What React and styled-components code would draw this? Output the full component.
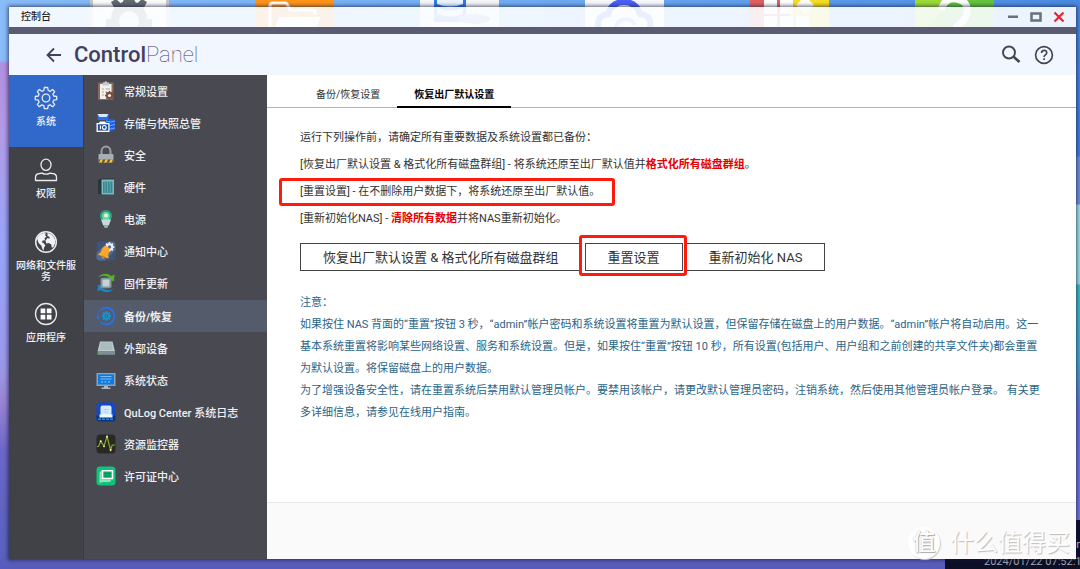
import React from "react";
import styled, { createGlobalStyle, css } from "styled-components";

const GlobalStyle = createGlobalStyle`
  *, *::before, *::after { box-sizing: border-box; }
  body {
    margin: 0;
    font-family: Roboto, "Noto Sans CJK SC", sans-serif;
    font-size: 11px;
    color: #333;
  }
  button { font-family: inherit; color: inherit; }
  p, h1, h2 { margin: 0; font-weight: 400; }
  svg { display: block; flex: none; }
`;

const highlightFrame = css`
  content: "";
  position: absolute;
  border: 3px solid #fd1b0e;
  border-radius: 3px;
  pointer-events: none;
`;

/* ---------- desktop ---------- */

const Desktop = styled.div`
  position: relative;
  display: flex;
  min-height: 100vh;
  padding: 7px 4px 10px 9px;
  overflow: hidden;
  background:
    linear-gradient(#5a5fbe, #565cbb) bottom / 100% 12px no-repeat,
    linear-gradient(#88bcf8 0, #8abcf9 60px, #b18fe0 64px, #b39ae6 130px, #96a5fa 250px, #9c97e8 370px, #9a85d4 400px, #6d68c8 450px, #5a62bd 540px) left / 30px 100% no-repeat,
    linear-gradient(#4a8be2 0, #4180d8 156px, #6d93e0 157px, #6d93e0 204px, #a4e4e6 205px, #9be0e2 284px, #3dbfc4 285px, #4aa9d0 360px, #6578d4 410px, #6f79dc 519px) right / 30px 100% no-repeat,
    linear-gradient(90deg, #88bcf8, #6fabf2 50%, #4a8be2);
`;

const AppRow = styled.div`
  position: absolute;
  top: 0;
  left: 90px;
  display: flex;
  gap: 86px;
`;

const StatusWidget = styled.div`
  position: absolute;
  right: 0;
  bottom: 0;
  width: 135px;
  height: 49px;
  padding-top: 18px;
  background: #0d0f26;
  color: #a9abb4;
  font-size: 11px;
  line-height: 14px;
  white-space: nowrap;
`;

const WidgetHost = styled.div`
  color: #d6d7dc;
  text-align: right;
`;

const WidgetTime = styled.time`
  display: block;
  padding: 3px 0 0 39px;
`;

const Watermark = styled.div`
  position: absolute;
  right: 10px;
  bottom: 10px;
  display: flex;
  align-items: center;
  gap: 10px;
  color: #fdfdfd;
  font-size: 24px;
  line-height: 32px;
  text-shadow: 1px 1px 1px #bbb;
`;

const WatermarkSeal = styled.span`
  width: 32px;
  height: 32px;
  border-radius: 50%;
  background: #fff;
  text-align: center;
  font-weight: 500;
  font-size: 23px;
  line-height: 31px;
  box-shadow: 1px 1px 1px #cfcfcf;
  text-shadow: 1px 1px 1px #aaa, 0 0 1px #aaa;
`;

/* ---------- window ---------- */

const Window = styled.main`
  position: relative;
  flex: 1;
  min-width: 0;
  display: flex;
  flex-direction: column;
  box-shadow: 0 0 4px 1px rgba(20, 22, 60, 0.7);
`;

const TitleBar = styled.header`
  display: flex;
  align-items: center;
  justify-content: space-between;
  height: 20px;
  padding: 0 11px 0 12px;
  background: rgba(251, 253, 255, 0.91);
`;

const WindowTitle = styled.h2`
  font-size: 10px;
  font-weight: 500;
  line-height: 18px;
  color: #222;
`;

const WindowControls = styled.div`
  display: flex;
  gap: 11px;
`;

const IconButton = styled.button`
  display: flex;
  padding: 0;
  border: 0;
  background: none;
  cursor: pointer;
`;

const AppHeader = styled.div`
  display: flex;
  align-items: center;
  height: 48px;
  padding: 0 22px 0 37px;
  border-top: 7px solid #5a5b73;
  background: #f2f6ff;
`;

const AppName = styled.h1`
  flex: 1;
  padding-left: 13px;
  font-size: 22px;
  line-height: 28px;
  font-weight: 100;
  color: #43405f;
  b { font-weight: 500; }
`;

const HeaderTools = styled.div`
  display: flex;
  gap: 13px;
`;

const Body = styled.div`
  flex: 1;
  display: flex;
`;

const Rail = styled.nav`
  flex: none;
  width: 74px;
  background: #414148;
`;

const RailItem = styled.button`
  display: flex;
  flex-direction: column;
  align-items: center;
  width: 100%;
  height: 72px;
  padding: 11px 6px 0;
  border: 0;
  background: ${(p) => (p.$active ? "#3169ca" : "none")};
  color: #f2f2f4;
  font-size: 10px;
  font-weight: 500;
  line-height: 11px;
  cursor: pointer;
  svg { margin-bottom: 6px; }
`;

const Menu = styled.nav`
  flex: none;
  width: 184px;
  border-left: 1px solid #3a3a40;
  background: #494951;
`;

const MenuList = styled.div`
  display: grid;
  grid-auto-rows: 1fr;
  height: 418px;
`;

const MenuItem = styled.button`
  display: flex;
  align-items: center;
  gap: 8px;
  padding: 0 12px 1px;
  border: 0;
  background: ${(p) => (p.$active ? "#545c6b" : "none")};
  color: #f0f0f2;
  font-size: 11px;
  font-weight: ${(p) => (p.$active ? 700 : 500)};
  text-align: left;
  cursor: pointer;
`;

const Main = styled.section`
  flex: 1;
  min-width: 0;
  display: flex;
  flex-direction: column;
  background: #fff;
`;

const Tabs = styled.div`
  display: flex;
  height: 33px;
  padding-left: 32px;
  border-bottom: 1px solid #b4b4b4;
`;

const Tab = styled.button`
  height: 33px;
  padding: 5px 17px 0;
  border: 0;
  border-bottom: 2px solid ${(p) => (p.$active ? "#000" : "transparent")};
  background: none;
  color: ${(p) => (p.$active ? "#000" : "#333")};
  font-size: 10px;
  font-weight: ${(p) => (p.$active ? 700 : 400)};
  cursor: pointer;
`;

const Content = styled.div`
  flex: 1;
  padding: 16px 30px 24px 33px;
`;

const Line = styled.p`
  position: relative;
  width: fit-content;
  line-height: 27px;
  ${(p) =>
    p.$framed &&
    css`
      &::after {
        ${highlightFrame}
        inset: 0 -15px -1px -21px;
      }
    `}
`;

const Danger = styled.strong`
  color: #e60000;
  font-weight: 700;
`;

const Actions = styled.div`
  display: flex;
  flex-wrap: wrap;
  gap: 3px;
  margin: 11px 0 21px;
`;

const ActionButton = styled.button`
  position: relative;
  z-index: ${(p) => (p.$framed ? 1 : 0)};
  height: 28px;
  padding: 0 22px 1px;
  border: 1px solid #444;
  background: #fff;
  font-size: 13px;
  white-space: nowrap;
  cursor: pointer;
  ${(p) =>
    p.$framed &&
    css`
      &::after {
        ${highlightFrame}
        inset: -9px -5px -6px -7px;
      }
    `}
`;

const Note = styled.div`
  color: #2a6488;
  line-height: 22px;
`;

const Footer = styled.footer`
  height: 57px;
  border-top: 1px solid #e8e8e8;
  background: #fafafa;
`;

/* ---------- drawings ---------- */

const GearShape = ({ cx, cy, r, teeth = 8, color, hole }) => (
  <g fill={color}>
    <circle cx={cx} cy={cy} r={r * 0.76} />
    {Array.from({ length: teeth }, (_, i) => (
      <rect
        key={i}
        x={cx - r * 0.18}
        y={cy - r}
        width={r * 0.36}
        height={r * 0.5}
        transform={`rotate(${(360 / teeth) * i} ${cx} ${cy})`}
      />
    ))}
    <circle cx={cx} cy={cy} r={r * 0.36} fill={hole} />
  </g>
);

const appTiles = [
  <>
    <path d="M0 0h79v28H0z" fill="#fbfbfa" />
    <path d="M0 0h3v28H0zM76 0h3v28h-3z" fill="#c9c9c9" />
    <g fill="#636b70">
      <circle cx="39" cy="19" r="18" />
      <path d="M36 -6h6l4 10h-14zM21 2l5-3 9 8-8 6zM57 2l-5-3-9 8 8 6zM16 19h46v9H16z" />
    </g>
    <circle cx="39" cy="21" r="10" fill="#eceeee" />
  </>,
  <>
    <path d="M0 0h79v28H0z" fill="#ff9418" />
    <path d="M15 28V6q0-3 3-3h12q2 0 3 3l2 4h22q3 0 3 3v2" fill="none" stroke="#fff" strokeWidth="3" />
    <path d="M24 17h42l-5 11H20z" fill="#fff" />
  </>,
  <>
    <path d="M0 0h79v28H0z" fill="#f4f7f8" />
    <path d="M14 0h32v22H14z" fill="#2f7bea" />
    <path d="M17 0h26v4q-13 5-26 0zM17 8q13 5 26 0v6q-13 5-26 0z" fill="#e9f4ff" />
    <ellipse cx="54" cy="19" rx="16" ry="5" fill="#8f9bd0" />
    <path d="M14 26q6-6 14-3h22l2 5H14z" fill="#fff" />
  </>,
  <>
    <path d="M0 0h79v28H0z" fill="#f6f9fb" />
    <path d="M14 30q-4-14 9-16Q27 2 39 2t16 12q14 2 9 16" fill="none" stroke="#4a62f5" strokeWidth="6" />
    <path d="M50 25a10 10 0 1 0 0 8" fill="none" stroke="#8b8af0" strokeWidth="4" />
  </>,
  <>
    <path d="M0 0h40v28H0z" fill="#e0605f" />
    <path d="M40 0h39v28H40z" fill="#f5de22" />
    <path d="M14 0h13v14H14zM30 0h13v14H30zM14 16h13v12H14zM30 16h13v12H30zM46 16h13v12H46zM46 5l9-9 9 9-9 9z" fill="#fff" />
  </>,
  <>
    <path d="M0 0h79v28H0z" fill="#63c43a" />
    <path d="M0 0h36L12 28H0z" fill="#9cdc34" />
    <path d="M26 10Q30-3 41-1q13 2 11 14-1 7-12 15" fill="none" stroke="#fff" strokeWidth="7" />
  </>,
];

const AppTile = ({ children }) => (
  <svg width="79" height="28" viewBox="0 0 79 28" aria-hidden="true">{children}</svg>
);

const RailIcon = ({ children }) => (
  <svg width="24" height="24" viewBox="0 0 24 24" fill="none" stroke="#e9ebef" strokeWidth="1.3" strokeLinejoin="round" aria-hidden="true">
    {children}
  </svg>
);

const railItems = [
  {
    label: "系统",
    active: true,
    icon: (
      <>
        <path d="M10.3 1.5h3.4l.5 3 1.9.8 2.5-1.8 2.1 2.1-1.8 2.5.8 1.9 3 .5v3.2l-3 .5-.8 1.9 1.8 2.5-2.1 2.1-2.5-1.8-1.9.8-.5 3h-3.4l-.5-3-1.9-.8-2.5 1.8-2.1-2.1 1.8-2.5-.8-1.9-3-.5v-3.2l3-.5.8-1.9-1.8-2.5 2.1-2.1 2.5 1.8 1.9-.8z" />
        <circle cx="12" cy="12" r="3.8" />
      </>
    ),
  },
  {
    label: "权限",
    icon: (
      <>
        <ellipse cx="12" cy="6.8" rx="5" ry="5.6" />
        <path d="M1.500 22.500v-3.300q0-3.200 4-3.700l2.700-.4q1.700 1.100 3.800 1.100t3.800-1.100l2.700.4q4 .5 4 3.700v3.300z" />
      </>
    ),
  },
  {
    label: "网络和文件服务",
    icon: (
      <>
        <circle cx="12" cy="12" r="10.3" strokeWidth="1.5" />
        <path fill="#f2f2f4" stroke="none" d="M3 8.500Q5 4 9.500 3l2.500.6-1 1.600 1.500 1.200-2 1.800.5 2-2.200.3-1 1.800 2 1 1.600 2.200-1.400 2-.4 3.200q-1.600-2-2.200-5L4.600 13zM13.500 3q5.500.8 7.400 6.500l.3 3.500-1.700 4-1.600.8-.6-3.300-2.600-1.500-2.300.4-1-2.600 1.800-2.600 2.500.2-.2-1.700-2-.8z" />
      </>
    ),
  },
  {
    label: "应用程序",
    icon: (
      <>
        <circle cx="12" cy="12" r="10.5" />
        <path fill="#fff" stroke="none" d="M6.600 6.600h4.700v4.700H6.600zM12.800 6.600h4.700v4.700h-4.700zM6.600 12.800h4.700v4.700H6.600zM12.800 12.800h4.700v4.700h-4.700z" />
      </>
    ),
  },
];

const MenuIcon = ({ children }) => (
  <svg width="20" height="20" viewBox="0 0 20 20" aria-hidden="true">{children}</svg>
);

const menuItems = [
  {
    label: "常规设置",
    icon: (
      <>
        <rect x="2" y="1.5" width="15.5" height="17.5" rx="1" fill="#8d6a5c" />
        <path d="M4 3h11.500v15H4z" fill="#f3f1ee" />
        <path d="M6.500 1.500h1.800Q9.700-.8 11.200 1.500H13v3H6.500z" fill="#c3cbd0" />
        <path d="M6 8h2M6 11h2M6 14h2M9.500 8h4.500M9.500 11h2" stroke="#a9a3a0" strokeWidth="1" />
        <GearShape cx={13.5} cy={14.5} r={4.5} color="#7a4b3a" hole="#f3f1ee" />
      </>
    ),
  },
  {
    label: "存储与快照总管",
    icon: (
      <>
        <path d="M1.500 1h11v6h-11z" fill="#2b6ff0" />
        <path d="M1.500 1h11l-2 3h-7z" fill="#d8eaff" />
        <path d="M10 7q4.500-2 9 0v10q-4.500 2-9 0z" fill="#1f5fe0" />
        <path d="M10 8q4.500 2 9 0M10 11.500q4.500 2 9 0M10 15q4.500 2 9 0" fill="none" stroke="#6fa8ff" strokeWidth="1" />
        <path d="M4 8.500h5l1 1.500h3.500v9h-13v-9H3z" fill="#fff" />
        <path d="M1.800 11.300h10.500v6.300H1.800z" fill="#174a9c" />
        <circle cx="8.3" cy="14.4" r="1.9" fill="none" stroke="#fff" strokeWidth="1.2" />
        <path d="M4.400 12.500v3.800" stroke="#fff" strokeWidth="1.2" />
      </>
    ),
  },
  {
    label: "安全",
    icon: (
      <>
        <path d="M5.500 10V6.500a4.500 5 0 0 1 9 0V10" fill="none" stroke="#9aa0a6" strokeWidth="2" />
        <rect x="2.5" y="9" width="15" height="8.5" rx="1" fill="#a9aeb4" />
        <path d="M2.500 14.500h15v3h-15z" fill="#5b5344" />
        <path d="M3 17.500l1.500-3H7l-1.500 3zM8 17.500l1.500-3H12l-1.500 3zM13 17.500l1.500-3H17l-1.500 3z" fill="#ffc928" />
      </>
    ),
  },
  {
    label: "硬件",
    icon: (
      <>
        <path d="M2 3l3-1.500h13V17l-12 1-4-1.500z" fill="#26363b" />
        <path d="M5.500 2.500h12.500v15H5.500z" fill="#7fb9bd" />
        <path d="M7 4.500h9.500v11.500H7z" fill="#3a8991" />
        <path d="M9 4.500V16M11.500 4.500V16M14 4.500V16" stroke="#69b1b8" strokeWidth=".8" />
      </>
    ),
  },
  {
    label: "电源",
    icon: (
      <>
        <path d="M10 1a6 6 0 0 1 6 6.200c0 3-2.500 4.300-3 7H7c-.5-2.700-3-4-3-7A6 6 0 0 1 10 1z" fill="#22a583" />
        <path d="M10 3a4 4 0 0 1 4 4.200c0 2-2 3.800-2 7H8c0-3.200-2-5-2-7A4 4 0 0 1 10 3z" fill="#6fd0ae" />
        <circle cx="10" cy="6.5" r="2" fill="#e7f7c0" />
        <path d="M5 10.500h10l-2.200 6H7.200z" fill="#c5dadd" />
        <path d="M8 16.500h4v1.700q-2 1.600-4 0z" fill="#9bb0b5" />
      </>
    ),
  },
  {
    label: "通知中心",
    icon: (
      <>
        <rect x=".5" y=".5" width="19" height="19" rx="3" fill="#3f5478" />
        <path d="M.5 12L12 .5h4.500a3 3 0 0 1 3 3V9L9 19.500H3.500a3 3 0 0 1-3-3z" fill="#536c96" />
        <GearShape cx={13.5} cy={6} r={4.8} color="#eef2f6" hole="#536c96" />
        <g transform="rotate(20 9 11)">
          <path d="M9 5q4 .5 4 5.200v2.800l1.500 2v1h-11v-1l1.500-2v-2.800Q5 5.500 9 5z" fill="#fca62c" />
          <circle cx="9" cy="16.5" r="1.5" fill="#e57f14" />
        </g>
      </>
    ),
  },
  {
    label: "固件更新",
    icon: (
      <>
        <path d="M2 4.500Q8-2 15.500 3L18.500 1.500 18 8.500 12.500 6l1.500-1Q8 1 2 4.500z" fill="#4fb51e" />
        <path d="M18 15.500Q12 22 4.500 17L1.500 18.500 2 11.500 7.500 14 6 15Q12 19 18 15.500z" fill="#1d86c8" />
        <rect x="4.5" y="4.8" width="11" height="10.4" rx="2" fill="#7f969e" />
        <rect x="6.5" y="6.5" width="7" height="7" rx="1" fill="#c4d2d5" />
      </>
    ),
  },
  {
    label: "备份/恢复",
    active: true,
    icon: (
      <>
        <path d="M4 4.500A8.300 8.300 0 1 1 4.500 16.200" fill="none" stroke="#2d6fe0" strokeWidth="2" />
        <path d="M1.500 12A8.500 8.500 0 0 1 4 4.500" fill="none" stroke="#2d6fe0" strokeWidth="1.4" strokeDasharray="1.5 1.2" />
        <path d="M0 10.500h4.500L2.300 14z" fill="#2d6fe0" />
        <GearShape cx={10.3} cy={10} r={4.8} color="#1793d1" hole="#545c6b" />
        <circle cx="10.3" cy="10" r=".9" fill="#1793d1" />
      </>
    ),
  },
  {
    label: "外部设备",
    icon: (
      <>
        <path d="M4 3.500h12.500l2.500 10H1.500z" fill="#bccace" />
        <path d="M5 4.500h10.500l1.600 7.500H3.500z" fill="#a9bbc1" />
        <path d="M1.500 13.500H19v3.300H1.500z" fill="#7d8f95" />
        <circle cx="4" cy="15.2" r="1" fill="#58c322" />
      </>
    ),
  },
  {
    label: "系统状态",
    icon: (
      <>
        <path d="M.5 3h19v13H.5z" fill="#8ca4b4" />
        <path d="M2 4.300h16v10.200H2z" fill="#0f7ae0" />
        <path d="M4.500 6.500h11M4.500 9h11" stroke="#7dbdf5" strokeWidth="1.2" />
        <path d="M5 11.800h10" stroke="#7dbdf5" strokeWidth="1.2" strokeDasharray="2 1.5" />
        <path d="M8 16h4v1.500h2.500V19h-9v-1.500H8z" fill="#a9b8c1" />
      </>
    ),
  },
  {
    label: "QuLog Center 系统日志",
    icon: (
      <>
        <rect x=".5" y=".5" width="19" height="19" rx="3.5" fill="#1647c4" />
        <path d="M.5 13.500h19V16a3.500 3.500 0 0 1-3.500 3.500H4A3.500 3.500 0 0 1 .5 16z" fill="#0a3488" />
        <path d="M6.500 3.500h7q2 0 2 2v7.500h-11V5.500q0-2 2-2z" fill="#d4ebff" />
        <path d="M3.500 12.500h13v3h-13z" fill="#eef8ff" />
        <path d="M7.500 7.500h5M7.500 10h5" stroke="#a9cdf5" strokeWidth="1.2" />
        <path d="M2 17.300h16" stroke="#2790cf" strokeWidth="1.5" strokeDasharray="3 1" />
      </>
    ),
  },
  {
    label: "资源监控器",
    icon: (
      <>
        <rect x=".5" y=".5" width="19" height="19" rx="3.5" fill="#2a2825" />
        <path d="M1 12.500h1.500l2.200-5.300 3.300 5 3-9.700 3.600 13.500 1.600-5H19" fill="none" stroke="#86a82c" strokeWidth="1.2" />
        <g fill="#f1f7cf">
          <circle cx="4.7" cy="7.2" r="1" />
          <circle cx="8" cy="12.3" r=".9" />
          <circle cx="11" cy="2.8" r="1" />
          <circle cx="14.6" cy="16" r="1" />
        </g>
      </>
    ),
  },
  {
    label: "许可证中心",
    icon: (
      <>
        <rect x=".5" y=".5" width="19" height="19" rx="3.5" fill="#10c27a" />
        <path d="M3.500 6.500l2-2v9h10l-1.500 2.500H7l-3.500 1z" fill="#8de6c0" />
        <path d="M6.500 4.700h10v7.800h-10z" fill="#10a869" stroke="#fff" strokeWidth="1.6" />
        <path d="M8.500 7.500h6M8.500 10h6" stroke="#0c8654" strokeWidth="1" />
      </>
    ),
  },
];

export default function App() {
  return (
    <>
      <GlobalStyle />
      <Desktop>
        <AppRow>
          {appTiles.map((tile, i) => (
            <AppTile key={i}>{tile}</AppTile>
          ))}
        </AppRow>
        <StatusWidget>
          <WidgetHost>or</WidgetHost>
          <WidgetTime>2024/01/22 07:52:1</WidgetTime>
        </StatusWidget>

        <Window>
          <TitleBar>
            <WindowTitle>控制台</WindowTitle>
            <WindowControls>
              <IconButton aria-label="最小化">
                <svg width="12" height="12" viewBox="0 0 12 12"><path d="M1 4.500h10v2.500H1z" fill="#66717b" /></svg>
              </IconButton>
              <IconButton aria-label="最大化">
                <svg width="12" height="12" viewBox="0 0 12 12"><path d="M1.500 2.500h9v7h-9z" fill="none" stroke="#66717b" strokeWidth="2.5" /></svg>
              </IconButton>
              <IconButton aria-label="关闭">
                <svg width="12" height="12" viewBox="0 0 12 12"><path d="M1.500 1.500l9 9M10.500 1.500l-9 9" stroke="#e8262b" strokeWidth="2.2" /></svg>
              </IconButton>
            </WindowControls>
          </TitleBar>

          <AppHeader>
            <IconButton aria-label="返回">
              <svg width="15" height="16" viewBox="0 0 15 16"><path d="M15 8H1.500M8 1.500L1.500 8 8 14.500" fill="none" stroke="#43405f" strokeWidth="1.8" /></svg>
            </IconButton>
            <AppName><b>Control</b>Panel</AppName>
            <HeaderTools>
              <IconButton aria-label="搜索">
                <svg width="20" height="20" viewBox="0 0 20 20" fill="none" stroke="#46464f">
                  <circle cx="8" cy="7.5" r="6" strokeWidth="1.9" />
                  <path d="M12.300 11.500l6.200 5.500" strokeWidth="2.6" />
                </svg>
              </IconButton>
              <IconButton aria-label="帮助">
                <svg width="20" height="20" viewBox="0 0 20 20" fill="none" stroke="#46464f">
                  <circle cx="10" cy="10" r="8.4" strokeWidth="1.7" />
                  <path d="M7.500 8q0-2.700 2.600-2.700T12.700 7.700q0 1.300-1.300 2.200T10.100 12" strokeWidth="1.7" />
                  <path d="M10.100 13.200V15" strokeWidth="1.8" />
                </svg>
              </IconButton>
            </HeaderTools>
          </AppHeader>

          <Body>
            <Rail>
              {railItems.map((item) => (
                <RailItem key={item.label} $active={item.active}>
                  <RailIcon>{item.icon}</RailIcon>
                  {item.label}
                </RailItem>
              ))}
            </Rail>
            <Menu>
              <MenuList>
                {menuItems.map((item) => (
                  <MenuItem key={item.label} $active={item.active}>
                    <MenuIcon>{item.icon}</MenuIcon>
                    {item.label}
                  </MenuItem>
                ))}
              </MenuList>
            </Menu>

            <Main>
              <Tabs role="tablist">
                <Tab role="tab" aria-selected="false">备份/恢复设置</Tab>
                <Tab role="tab" aria-selected="true" $active>恢复出厂默认设置</Tab>
              </Tabs>
              <Content>
                <Line>运行下列操作前，请确定所有重要数据及系统设置都已备份：</Line>
                <Line>
                  [恢复出厂默认设置 &amp; 格式化所有磁盘群组] - 将系统还原至出厂默认值并<Danger>格式化所有磁盘群组</Danger>。
                </Line>
                <Line $framed>[重置设置] - 在不删除用户数据下，将系统还原至出厂默认值。</Line>
                <Line>
                  [重新初始化NAS] - <Danger>清除所有数据</Danger>并将NAS重新初始化。
                </Line>
                <Actions>
                  <ActionButton>恢复出厂默认设置 &amp; 格式化所有磁盘群组</ActionButton>
                  <ActionButton $framed>重置设置</ActionButton>
                  <ActionButton>重新初始化 NAS</ActionButton>
                </Actions>
                <Note>
                  <p>注意：</p>
                  <p>
                    如果按住 NAS 背面的“重置”按钮 3 秒，“admin”帐户密码和系统设置将重置为默认设置，但保留存储在磁盘上的用户数据。“admin”帐户将自动启用。这一基本系统重置将影响某些网络设置、服务和系统设置。但是，如果按住“重置”按钮 10 秒，所有设置(包括用户、用户组和之前创建的共享文件夹)都会重置为默认设置。将保留磁盘上的用户数据。
                  </p>
                  <p>
                    为了增强设备安全性，请在重置系统后禁用默认管理员帐户。要禁用该帐户，请更改默认管理员密码，注销系统，然后使用其他管理员帐户登录。 有关更多详细信息，请参见在线用户指南。
                  </p>
                </Note>
              </Content>
              <Footer />
            </Main>
          </Body>
        </Window>

        <Watermark>
          <WatermarkSeal>值</WatermarkSeal>
          <span>什么值得买</span>
        </Watermark>
      </Desktop>
    </>
  );
}
